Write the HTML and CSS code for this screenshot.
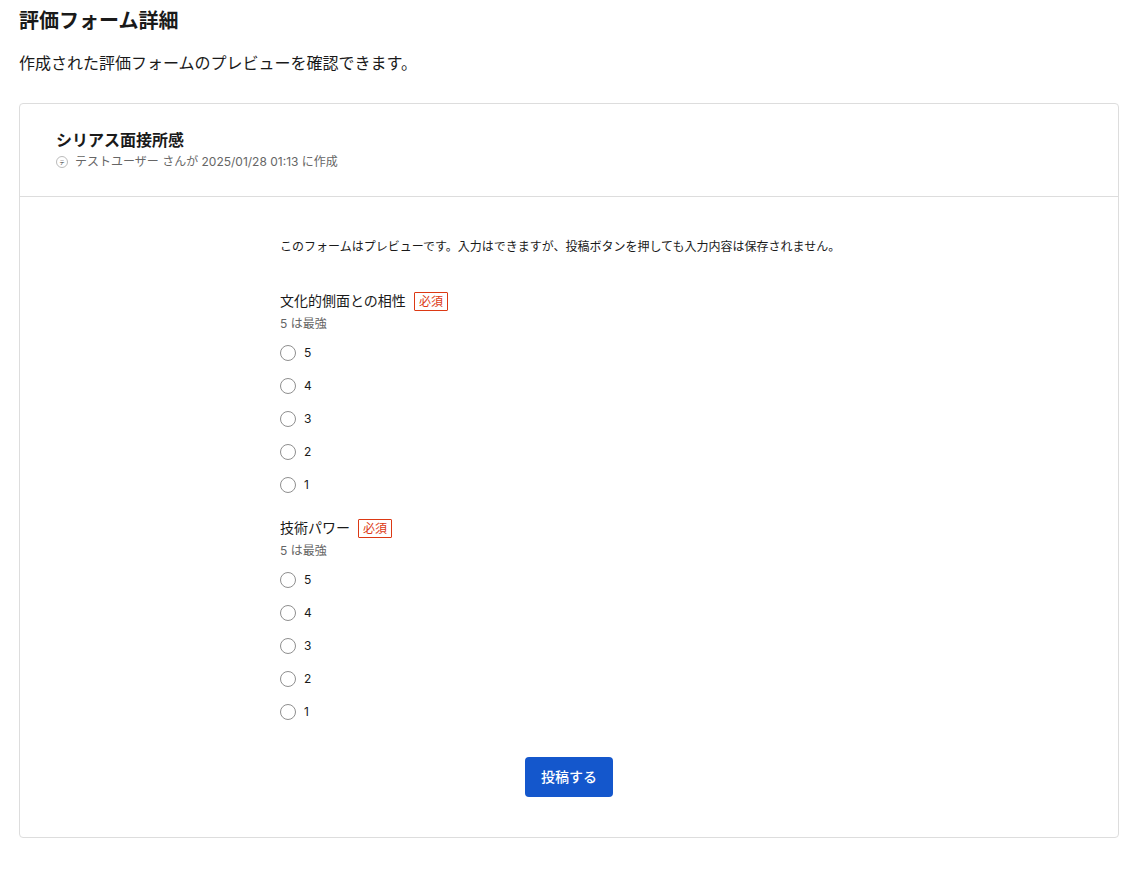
FILE: index.html
```html
<!DOCTYPE html>
<html lang="ja">
<head>
  <meta charset="UTF-8">
  <meta name="viewport" content="width=device-width, initial-scale=1.0">
  <title>評価フォーム詳細</title>
  <link rel="stylesheet" href="styles.css">
</head>
<body>
  <main class="page">
    <h1>評価フォーム詳細</h1>
    <p class="lead">作成された評価フォームのプレビューを確認できます。</p>

    <section class="card">
      <header class="card-header">
        <h2>シリアス面接所感</h2>
        <div class="meta">
          <span class="avatar" aria-hidden="true">テ</span>
          <span>テストユーザー さんが 2025/01/28 01:13 に作成</span>
        </div>
      </header>

      <form class="form">
        <p class="notice">このフォームはプレビューです。入力はできますが、投稿ボタンを押しても入力内容は保存されません。</p>

        <fieldset class="question">
          <legend><span class="title">文化的側面との相性</span><span class="required">必須</span></legend>
          <p class="hint">5 は最強</p>
          <div class="options">
            <label><input type="radio" name="culture" value="5">5</label>
            <label><input type="radio" name="culture" value="4">4</label>
            <label><input type="radio" name="culture" value="3">3</label>
            <label><input type="radio" name="culture" value="2">2</label>
            <label><input type="radio" name="culture" value="1">1</label>
          </div>
        </fieldset>

        <fieldset class="question">
          <legend><span class="title">技術パワー</span><span class="required">必須</span></legend>
          <p class="hint">5 は最強</p>
          <div class="options">
            <label><input type="radio" name="skill" value="5">5</label>
            <label><input type="radio" name="skill" value="4">4</label>
            <label><input type="radio" name="skill" value="3">3</label>
            <label><input type="radio" name="skill" value="2">2</label>
            <label><input type="radio" name="skill" value="1">1</label>
          </div>
        </fieldset>

        <button class="submit" type="button">投稿する</button>
      </form>
    </section>
  </main>
</body>
</html>
```
FILE: styles.css
```css
* {
  box-sizing: border-box;
}
body {
  margin: 0;
  font-family: Inter, "Noto Sans CJK JP", sans-serif;
  color: #1a1a1a;
  background: #fff;
}
h1, h2, p {
  margin: 0;
}
.page {
  padding: 6px 27px 40px 19px;
}
h1 {
  font-size: 20px;
  line-height: 30px;
}
.lead {
  margin-top: 14px;
  font-size: 16px;
  line-height: 26px;
}
.card {
  margin-top: 27px;
  border: 1px solid #ddd;
  border-radius: 4px;
}
.card-header {
  padding: 24px 36px;
  border-bottom: 1px solid #ddd;
}
h2 {
  font-size: 16px;
  line-height: 24px;
}
.meta {
  display: flex;
  align-items: center;
  gap: 7px;
  font-size: 12px;
  line-height: 20px;
  color: #666;
}
.avatar {
  width: 12px;
  height: 12px;
  border: 1px solid #bbb;
  border-radius: 50%;
  font-size: 5px;
  line-height: 10px;
  text-align: center;
  color: #333;
}
.form {
  max-width: 578px;
  margin: 0 auto;
  padding: 40px 0;
}
.notice {
  margin-bottom: 34px;
  font-size: 12px;
  line-height: 20px;
}
.question {
  min-width: 0;
  margin: 0 0 17px;
  padding: 0;
  border: 0;
}
legend {
  display: flex;
  align-items: center;
  gap: 8px;
  padding: 0;
  font-size: 14px;
  line-height: 20px;
}
.required {
  padding: 0 4px;
  border: 1px solid #dc3914;
  border-radius: 1px;
  font-size: 12px;
  line-height: 17px;
  color: #dc3914;
}
.hint {
  margin-top: 3px;
  font-size: 12px;
  line-height: 20px;
  color: #666;
}
.options {
  margin-top: 2px;
}
.options label {
  display: flex;
  align-items: center;
  gap: 8px;
  width: max-content;
  font-size: 12px;
  line-height: 33px;
}
.options input {
  appearance: none;
  width: 16px;
  height: 16px;
  margin: 0;
  border: 1px solid #8f8f8f;
  border-radius: 50%;
  background: #fff;
}
.options input:checked {
  border: 5px solid #1457cc;
}
.submit {
  display: block;
  margin: 29px auto 0;
  padding: 10px 16px;
  border: 0;
  border-radius: 4px;
  background: #1457cc;
  color: #fff;
  font-family: inherit;
  font-size: 14px;
  font-weight: 500;
  line-height: 20px;
  cursor: pointer;
}
```
